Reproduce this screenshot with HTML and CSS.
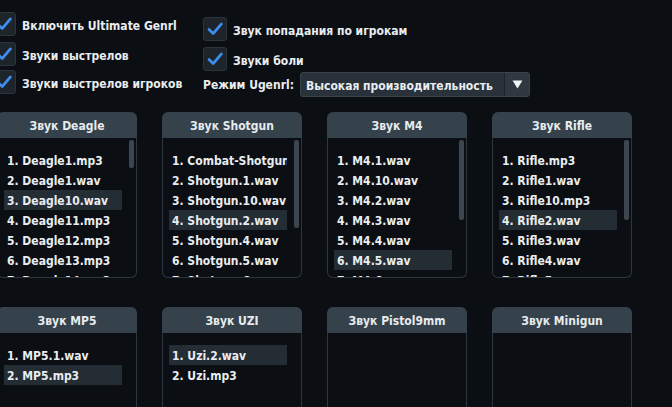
FILE: index.html
```html
<!DOCTYPE html>
<html lang="ru">
<head>
<meta charset="utf-8">
<link rel="stylesheet" href="styles.css">
</head>
<body>
<div class="page">
  <div class="top">
    <div class="col col-left">
      <label class="check r1"><span class="box"><svg viewBox="0 0 24 24"><path d="M5.5 12.5 L10 17 L19 6.5"/></svg></span><span class="lbl">Включить Ultimate Genrl</span></label>
      <label class="check r2"><span class="box"><svg viewBox="0 0 24 24"><path d="M5.5 12.5 L10 17 L19 6.5"/></svg></span><span class="lbl">Звуки выстрелов</span></label>
      <label class="check r3"><span class="box"><svg viewBox="0 0 24 24"><path d="M5.5 12.5 L10 17 L19 6.5"/></svg></span><span class="lbl">Звуки выстрелов игроков</span></label>
    </div>
    <div class="col col-right">
      <label class="check"><span class="box"><svg viewBox="0 0 24 24"><path d="M5.5 12.5 L10 17 L19 6.5"/></svg></span><span class="lbl">Звук попадания по игрокам</span></label>
      <label class="check r2b"><span class="box"><svg viewBox="0 0 24 24"><path d="M5.5 12.5 L10 17 L19 6.5"/></svg></span><span class="lbl">Звуки боли</span></label>
      <div class="mode">
        <span class="mode-lbl">Режим Ugenrl:</span>
        <div class="select"><span class="sel-text">Высокая производительность</span><span class="sel-arrow"><svg viewBox="0 0 12 10"><path d="M0.5 0.5 H11.5 L6 9.5 Z"/></svg></span></div>
      </div>
    </div>
  </div>

  <div class="grid">
    <div class="panel">
      <div class="head">Звук Deagle</div>
      <div class="body">
        <ul class="list">
          <li>1. Deagle1.mp3</li><li>2. Deagle1.wav</li><li class="sel">3. Deagle10.wav</li><li>4. Deagle11.mp3</li><li>5. Deagle12.mp3</li><li>6. Deagle13.mp3</li><li>7. Deagle14.mp3</li>
        </ul>
        <div class="sb"><div class="thumb" style="height:28px"></div></div>
      </div>
    </div>
    <div class="panel">
      <div class="head">Звук Shotgun</div>
      <div class="body">
        <ul class="list">
          <li>1. Combat-Shotgun.wav</li><li>2. Shotgun.1.wav</li><li>3. Shotgun.10.wav</li><li class="sel">4. Shotgun.2.wav</li><li>5. Shotgun.4.wav</li><li>6. Shotgun.5.wav</li><li>7. Shotgun.6.wav</li>
        </ul>
        <div class="sb"><div class="thumb" style="height:88px"></div></div>
      </div>
    </div>
    <div class="panel">
      <div class="head">Звук M4</div>
      <div class="body">
        <ul class="list">
          <li>1. M4.1.wav</li><li>2. M4.10.wav</li><li>3. M4.2.wav</li><li>4. M4.3.wav</li><li>5. M4.4.wav</li><li class="sel">6. M4.5.wav</li><li>7. M4.6.wav</li>
        </ul>
        <div class="sb"><div class="thumb" style="height:80px"></div></div>
      </div>
    </div>
    <div class="panel">
      <div class="head">Звук Rifle</div>
      <div class="body">
        <ul class="list">
          <li>1. Rifle.mp3</li><li>2. Rifle1.wav</li><li>3. Rifle10.mp3</li><li class="sel">4. Rifle2.wav</li><li>5. Rifle3.wav</li><li>6. Rifle4.wav</li><li>7. Rifle5.wav</li>
        </ul>
        <div class="sb"><div class="thumb" style="height:80px"></div></div>
      </div>
    </div>

    <div class="panel">
      <div class="head">Звук MP5</div>
      <div class="body">
        <ul class="list">
          <li>1. MP5.1.wav</li><li class="sel">2. MP5.mp3</li>
        </ul>
      </div>
    </div>
    <div class="panel">
      <div class="head">Звук UZI</div>
      <div class="body">
        <ul class="list">
          <li class="sel">1. Uzi.2.wav</li><li>2. Uzi.mp3</li>
        </ul>
      </div>
    </div>
    <div class="panel">
      <div class="head">Звук Pistol9mm</div>
      <div class="body"><ul class="list"></ul></div>
    </div>
    <div class="panel">
      <div class="head">Звук Minigun</div>
      <div class="body"><ul class="list"></ul></div>
    </div>
  </div>
</div>
</body>
</html>
```

FILE: styles.css
```css
html, body {
  margin: 0;
  padding: 0;
  background: #0b0e12;
  overflow: hidden;
  height: 407px;
}
body {
  font-family: "DejaVu Sans Condensed", "DejaVu Sans", Verdana, sans-serif;
  font-stretch: condensed;
  font-weight: bold;
  font-size: 12px;
  color: #e9edf0;
}
.page {
  width: 672px;
  height: 407px;
  overflow: hidden;
}
.top {
  display: flex;
  height: 112px;
}
.col {
  display: flex;
  flex-direction: column;
}
.col-left {
  margin-left: -8px;
  width: 211px;
  padding-top: 12px;
}
.col-right {
  padding-top: 17px;
}
.check {
  display: flex;
  align-items: center;
  height: 24px;
}
.lbl {
  margin-left: 6px;
  white-space: nowrap;
  padding-top: 3px;
}
.col-left .r2 { margin-top: 6px; }
.col-left .r3 { margin-top: 4px; }
.col-right .r2b { margin-top: 6px; }
.box {
  width: 22px;
  height: 22px;
  border: 1px solid #2c343c;
  background: #1d242a;
  border-radius: 3px;
  display: flex;
  align-items: center;
  justify-content: center;
  flex: none;
}
.box svg {
  width: 22px;
  height: 22px;
}
.box path {
  fill: none;
  stroke: #3e8ef2;
  stroke-width: 3;
  stroke-linecap: round;
  stroke-linejoin: round;
}
.mode {
  display: flex;
  align-items: center;
  margin-top: 1px;
  height: 25px;
}
.mode-lbl {
  width: 97px;
  white-space: nowrap;
}
.select {
  width: 228px;
  height: 23px;
  border: 1px solid #3a434c;
  background: #29323b;
  border-radius: 3px;
  display: flex;
  align-items: center;
}
.sel-text {
  flex: 1;
  padding-left: 5px;
  padding-top: 2px;
  white-space: nowrap;
}
.sel-arrow {
  width: 24px;
  height: 23px;
  border-left: 1px solid #1c2228;
  background: #2f3841;
  display: flex;
  align-items: center;
  justify-content: center;
  border-radius: 0 3px 3px 0;
}
.sel-arrow svg {
  width: 11px;
  height: 9px;
}
.sel-arrow path {
  fill: #f2f4f6;
}
.grid {
  display: grid;
  grid-template-columns: repeat(4, 140px);
  grid-auto-rows: 166px;
  column-gap: 25px;
  row-gap: 29px;
  margin-left: -3px;
}
.panel {
  display: flex;
  flex-direction: column;
  width: 140px;
  height: 166px;
}
.head {
  height: 26px;
  padding-top: 2px;
  box-sizing: border-box;
  background: #35414b;
  border-radius: 6px 6px 0 0;
  display: flex;
  align-items: center;
  justify-content: center;
  color: #e6ebee;
  white-space: nowrap;
}
.body {
  flex: 1;
  display: flex;
  border: 1px solid #2d363e;
  border-top: none;
  border-radius: 0 0 6px 6px;
  background: #0b0e12;
  overflow: hidden;
  min-height: 0;
}
.list {
  list-style: none;
  margin: 0;
  padding: 12px 0 0 6px;
  width: 118px;
  overflow: hidden;
}
.list li {
  height: 20px;
  line-height: 22px;
  padding-left: 3px;
  white-space: nowrap;
  overflow: hidden;
}
.list li.sel {
  background: #242c34;
}
.sb {
  margin: 2px 0 0 7px;
  width: 5px;
}
.thumb {
  width: 5px;
  background: #3b4650;
  border-radius: 2px;
}
```
